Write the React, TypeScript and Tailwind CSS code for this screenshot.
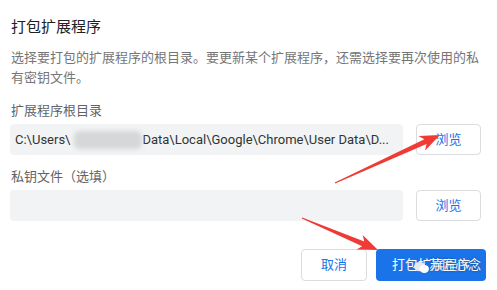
import React from "react";

type Pt = [number, number];

function arrowPoints(tail: Pt, tip: Pt, headLen = 20, headHalf = 8, shaftTail = 0.6, shaftHead = 2.6): string {
  const dx = tip[0] - tail[0];
  const dy = tip[1] - tail[1];
  const len = Math.hypot(dx, dy);
  const ux = dx / len;
  const uy = dy / len;
  const nx = -uy;
  const ny = ux;
  const bx = tip[0] - ux * headLen;
  const by = tip[1] - uy * headLen;
  const nbx = tip[0] - ux * (headLen - 4);
  const nby = tip[1] - uy * (headLen - 4);
  const pts: Pt[] = [
    [tail[0] + nx * shaftTail, tail[1] + ny * shaftTail],
    [nbx + nx * shaftHead, nby + ny * shaftHead],
    [bx + nx * headHalf, by + ny * headHalf],
    tip,
    [bx - nx * headHalf, by - ny * headHalf],
    [nbx - nx * shaftHead, nby - ny * shaftHead],
    [tail[0] - nx * shaftTail, tail[1] - ny * shaftTail],
  ];
  return pts.map((p) => `${p[0].toFixed(1)},${p[1].toFixed(1)}`).join(" ");
}

export default function App() {
  const font = { fontFamily: 'Roboto, "Noto Sans CJK SC", sans-serif' };
  return (
    <div className="relative w-[497px] h-[290px] bg-white overflow-hidden" style={font}>
      <div className="flex flex-col px-[10px] pt-[17px]">
        <div className="text-[15px] leading-[20px] text-[#202124] pl-[1px]">打包扩展程序</div>
        <div className="mt-[11px] text-[13px] leading-[20px] text-[#757575] pl-[1px] w-[476px]">
          选择要打包的扩展程序的根目录。要更新某个扩展程序，还需选择要再次使用的私有密钥文件。
        </div>
        <div className="mt-[13px] text-[13px] leading-[20px] text-[#5f6368] pl-[1px]">扩展程序根目录</div>
        <div className="mt-[3px] flex items-center gap-[13px] w-[471px]">
          <div className="w-[393px] h-[31px] rounded-[4px] bg-[#f1f3f4] flex items-center pl-[5px] pr-[8px] text-[13px] text-[#333333] whitespace-nowrap overflow-hidden">
            <span>C:\Users\</span>
            <span className="inline-block ml-[4px] w-[68px] h-[18px] bg-[#d6d7d9] blur-[2px] rounded-[6px]" />
            <span>Data\Local\Google\Chrome\User Data\D...</span>
          </div>
          <button className="w-[65px] h-[31px] rounded-[4px] border border-[#dadce0] bg-white text-[13px] text-[#1a73e8] flex items-center justify-center">
            浏览
          </button>
        </div>
        <div className="mt-[12px] text-[13px] leading-[20px] text-[#5f6368] pl-[1px]">私钥文件（选填）</div>
        <div className="mt-[3px] flex items-center gap-[13px] w-[471px]">
          <div className="w-[393px] h-[31px] rounded-[4px] bg-[#f1f3f4]" />
          <button className="w-[65px] h-[31px] rounded-[4px] border border-[#dadce0] bg-white text-[13px] text-[#1a73e8] flex items-center justify-center">
            浏览
          </button>
        </div>
        <div className="mt-[28px] flex justify-end gap-[9px] pr-[1px]">
          <button className="w-[66px] h-[32px] rounded-[4px] border border-[#dadce0] bg-white text-[13px] text-[#1a73e8] flex items-center justify-center">
            取消
          </button>
          <button className="relative w-[110px] h-[32px] rounded-[4px] bg-[#1a73e8] text-[13px] text-white flex items-center pl-[16px]">
            打包扩展程序
            <span className="absolute left-[38px] top-[12px] w-[15px] h-[12px] flex items-center">
              <svg width="16" height="13" viewBox="0 0 16 13">
                <ellipse cx="6" cy="5.5" rx="6" ry="5" fill="#e8eaed" />
                <ellipse cx="11" cy="8" rx="5" ry="4.3" fill="#ffffff" />
              </svg>
            </span>
            <span className="absolute left-[53px] top-[7px] text-[13px] leading-[18px] text-white [text-shadow:0_0_2px_rgba(0,0,0,0.6)]">
              苏匠心念
            </span>
          </button>
        </div>
      </div>
      <svg className="absolute left-0 top-0 pointer-events-none" width="497" height="290">
        <polygon points={arrowPoints([335, 183], [440, 135])} fill="#ef3a35" />
        <polygon points={arrowPoints([302, 218], [378, 250])} fill="#ef3a35" />
      </svg>
    </div>
  );
}
